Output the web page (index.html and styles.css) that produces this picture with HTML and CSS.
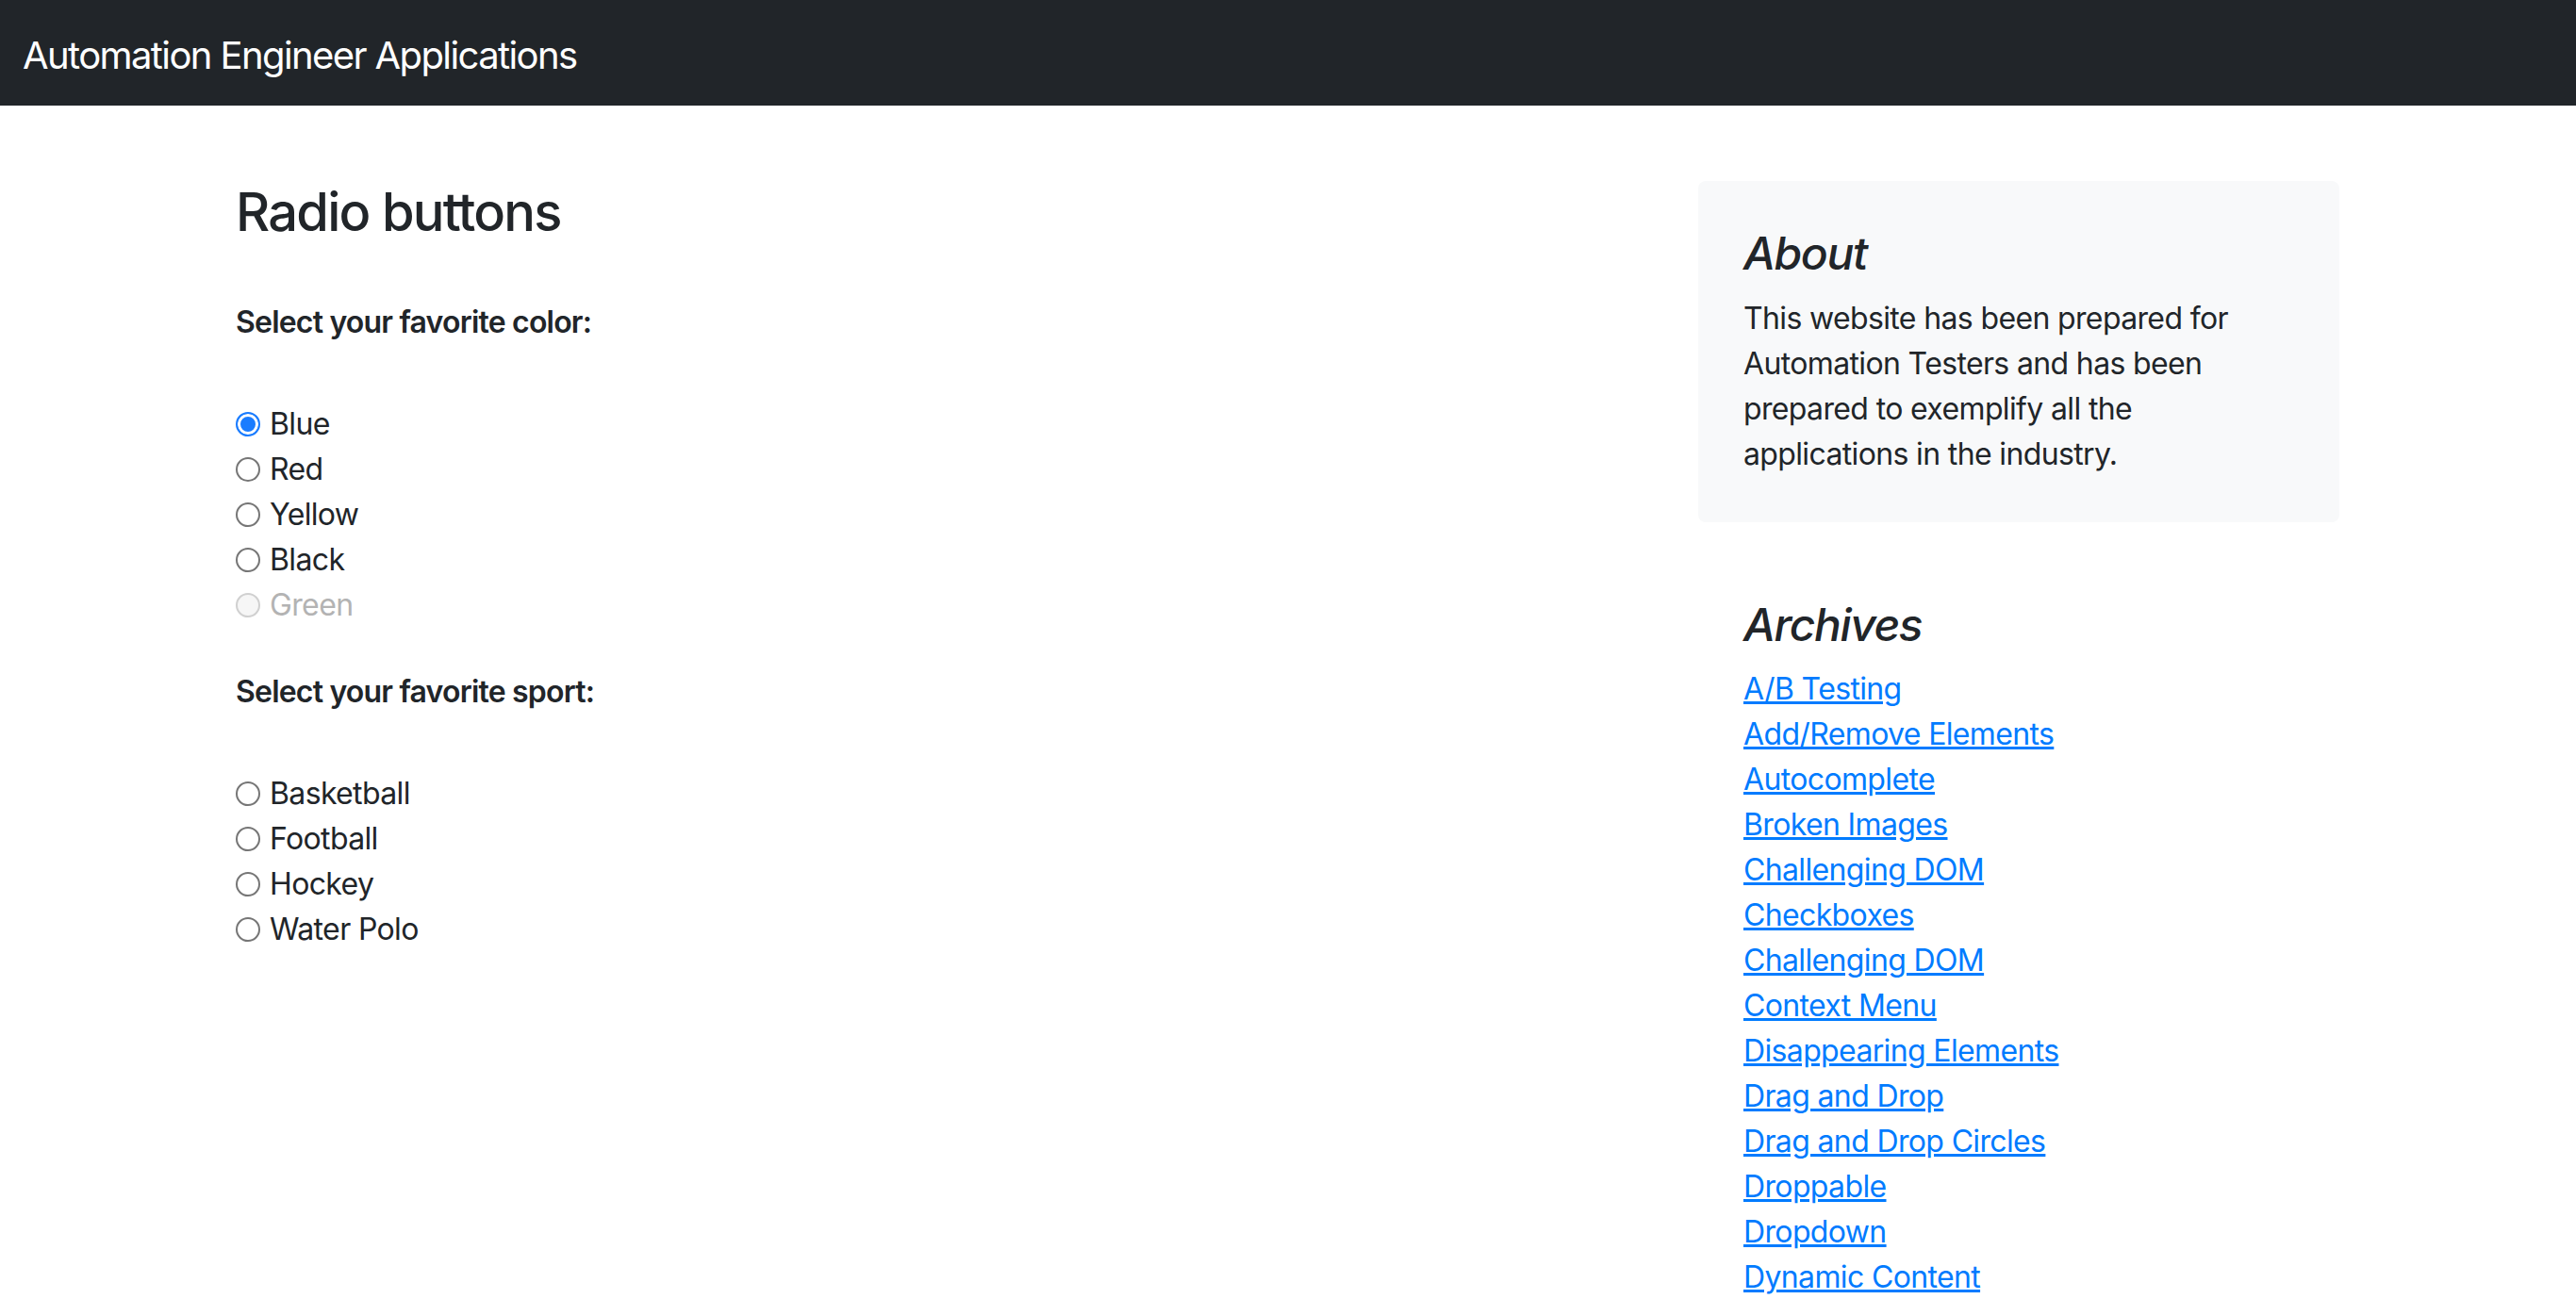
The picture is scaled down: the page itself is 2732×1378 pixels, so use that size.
FILE: index.html
```html
<!DOCTYPE html>
<html lang="en">
<head>
<meta charset="utf-8">
<title>Radio buttons</title>
<link rel="stylesheet" href="styles.css">
</head>
<body>
<header class="navbar">
  <span class="brand">Automation Engineer Applications</span>
</header>
<div class="page">
  <main class="main">
    <h3 class="title">Radio buttons</h3>
    <div class="group group-first">
      <p class="group-label">Select your favorite color:</p>
      <label class="option"><input type="radio" name="color" checked><span>Blue</span></label>
      <label class="option"><input type="radio" name="color"><span>Red</span></label>
      <label class="option"><input type="radio" name="color"><span>Yellow</span></label>
      <label class="option"><input type="radio" name="color"><span>Black</span></label>
      <label class="option option-disabled"><input type="radio" name="color" disabled><span>Green</span></label>
    </div>
    <div class="group">
      <p class="group-label">Select your favorite sport:</p>
      <label class="option"><input type="radio" name="sport"><span>Basketball</span></label>
      <label class="option"><input type="radio" name="sport"><span>Football</span></label>
      <label class="option"><input type="radio" name="sport"><span>Hockey</span></label>
      <label class="option"><input type="radio" name="sport"><span>Water Polo</span></label>
    </div>
  </main>
  <aside class="sidebar">
    <div class="about">
      <h4 class="side-title">About</h4>
      <p class="about-text">This website has been prepared for Automation Testers and has been prepared to exemplify all the applications in the industry.</p>
    </div>
    <div class="archives">
      <h4 class="side-title">Archives</h4>
      <ul class="links">
        <li><a href="#">A/B Testing</a></li>
        <li><a href="#">Add/Remove Elements</a></li>
        <li><a href="#">Autocomplete</a></li>
        <li><a href="#">Broken Images</a></li>
        <li><a href="#">Challenging DOM</a></li>
        <li><a href="#">Checkboxes</a></li>
        <li><a href="#">Challenging DOM</a></li>
        <li><a href="#">Context Menu</a></li>
        <li><a href="#">Disappearing Elements</a></li>
        <li><a href="#">Drag and Drop</a></li>
        <li><a href="#">Drag and Drop Circles</a></li>
        <li><a href="#">Droppable</a></li>
        <li><a href="#">Dropdown</a></li>
        <li><a href="#">Dynamic Content</a></li>
      </ul>
    </div>
  </aside>
</div>
</body>
</html>
```

FILE: styles.css
```css
html, body {
  margin: 0;
  padding: 0;
}
body {
  font-family: Inter, "Noto Sans", "Liberation Sans", sans-serif;
  font-size: 32px;
  line-height: 48px;
  letter-spacing: -0.02em;
  color: #212529;
  background: #fff;
  overflow: hidden;
  height: 1378px;
}
.navbar {
  height: 112px;
  background: #212529;
  display: flex;
  align-items: center;
  padding: 6px 24px 0;
  box-sizing: border-box;
}
.brand {
  color: #fff;
  font-size: 40px;
  line-height: 60px;
  letter-spacing: -0.04em;
}
.page {
  display: flex;
  justify-content: space-between;
  align-items: flex-start;
  padding: 80px 251px 0 250px;
}
.main {
  flex: 1;
}
.title {
  margin: 0 0 16px;
  font-size: 56px;
  line-height: 1.2;
  font-weight: 500;
  letter-spacing: -0.031em;
}
.group {
  margin-top: 44px;
}
.group-first {
  margin-top: 59px;
}
.group-label {
  margin: 0 0 60px;
  font-weight: 600;
  letter-spacing: -0.025em;
}
.option {
  display: flex;
  align-items: center;
  height: 48px;
}
.option input {
  appearance: none;
  -webkit-appearance: none;
  width: 26px;
  height: 26px;
  margin: 0 10px 0 0;
  border: 2px solid #767676;
  border-radius: 50%;
  background: #fff;
  box-sizing: border-box;
  flex: none;
}
.option input:checked {
  border-color: #1a7cff;
  background: #1a7cff;
  box-shadow: inset 0 0 0 3px #fff;
}
.option input:disabled {
  border-color: #d0d0d0;
  background: #f6f6f6;
}
.option-disabled {
  color: #b3b3b3;
}
.sidebar {
  width: 680px;
}
.about {
  background: #f8f9fa;
  border-radius: 8px;
  padding: 48px;
}
.side-title {
  margin: 0 0 16px;
  font-size: 48px;
  line-height: 1.2;
  font-style: italic;
  font-weight: 500;
  letter-spacing: -0.03em;
}
.about-text {
  margin: 0;
}
.archives {
  margin-top: 32px;
  padding: 48px;
}
.links {
  list-style: none;
  margin: 0;
  padding: 0;
}
.links a {
  color: #007bff;
  text-decoration: underline;
}
```
